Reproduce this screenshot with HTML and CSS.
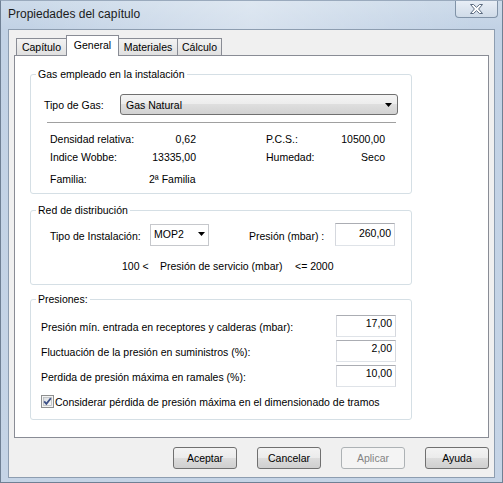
FILE: index.html
```html
<!DOCTYPE html>
<html lang="es">
<head>
<meta charset="utf-8">
<title>Propiedades del capítulo</title>
<link rel="stylesheet" href="styles.css">
</head>
<body>
<div class="window">
  <div class="titlebar">
    <span class="title">Propiedades del capítulo</span>
    <div class="close">
      <svg width="15" height="12" viewBox="0 0 15 12"><polygon points="1.5,1.5 4.5,1.5 7.5,4.3 10.5,1.5 13.5,1.5 9.6,6 13.5,10.5 10.5,10.5 7.5,7.7 4.5,10.5 1.5,10.5 5.4,6" fill="#fff" stroke="#5b6b80" stroke-width="1" stroke-linejoin="round"/></svg>
    </div>
  </div>
  <div class="client">
    <div class="tabs">
      <div class="tab t1">Capítulo</div>
      <div class="tab sel t2">General</div>
      <div class="tab t3">Materiales</div>
      <div class="tab t4">Cálculo</div>
    </div>
    <div class="panel">
      <div class="group g1">
        <span class="legend">Gas empleado en la instalación</span>
        <div class="gas-row">
          <span class="gas-label">Tipo de Gas:</span>
          <div class="combo big">
            <span>Gas Natural</span>
            <svg class="arrow" width="7" height="4" viewBox="0 0 7 4"><polygon points="0,0 7,0 3.5,4" fill="#000"/></svg>
          </div>
        </div>
        <div class="sep"></div>
        <div class="props">
          <span class="c1">Densidad relativa:</span><span class="c2">0,62</span><span class="c4">P.C.S.:</span><span class="c5">10500,00</span>
          <span class="c1">Indice Wobbe:</span><span class="c2">13335,00</span><span class="c4">Humedad:</span><span class="c5">Seco</span>
          <span class="c1">Familia:</span><span class="c2 left">2ª Familia</span>
        </div>
      </div>
      <div class="group g2">
        <span class="legend">Red de distribución</span>
        <div class="inst-row">
          <span class="inst-label">Tipo de Instalación:</span>
          <div class="combo small">
            <span>MOP2</span>
            <svg class="arrow" width="7" height="4" viewBox="0 0 7 4"><polygon points="0,0 7,0 3.5,4" fill="#000"/></svg>
          </div>
          <span class="pres-label">Presión (mbar) :</span>
          <div class="edit tall">260,00</div>
        </div>
        <div class="range">
          <span class="r1">100 &lt;</span><span class="r2">Presión de servicio (mbar)</span><span>&lt;= 2000</span>
        </div>
      </div>
      <div class="group g3">
        <span class="legend">Presiones:</span>
        <div class="prow"><span>Presión mín. entrada en receptores y calderas (mbar):</span><div class="edit">17,00</div></div>
        <div class="prow"><span>Fluctuación de la presión en suministros (%):</span><div class="edit">2,00</div></div>
        <div class="prow"><span>Perdida de presión máxima en ramales (%):</span><div class="edit">10,00</div></div>
        <div class="check-row">
          <svg class="checkbox" width="13" height="13" viewBox="0 0 13 13">
            <defs><linearGradient id="cbg" x1="0" y1="0" x2="1" y2="1"><stop offset="0" stop-color="#d9dcdf"/><stop offset="1" stop-color="#fbfbfb"/></linearGradient></defs>
            <rect x="0.5" y="0.5" width="12" height="12" fill="#f4f4f4" stroke="#8e8f8f"/>
            <rect x="2.5" y="2.5" width="8" height="8" fill="url(#cbg)" stroke="#b9bcbf" stroke-width="0.8"/>
            <path d="M3.2 6.4 L5.4 8.9 L9.8 3.3" fill="none" stroke="#3c4f86" stroke-width="1.8"/>
          </svg>
          <span>Considerar pérdida de presión máxima en el dimensionado de tramos</span>
        </div>
      </div>
    </div>
    <div class="buttons">
      <div class="btn">Aceptar</div>
      <div class="btn">Cancelar</div>
      <div class="btn disabled">Aplicar</div>
      <div class="btn">Ayuda</div>
    </div>
  </div>
</div>
</body>
</html>
```
FILE: styles.css
```css
* { box-sizing: border-box; }
html, body { margin: 0; padding: 0; }
body {
  font-family: "Liberation Sans", Arial, sans-serif;
  font-size: 10.5px;
  color: #000;
  background: #fff;
}
.window {
  width: 503px;
  height: 483px;
  border: 1px solid #6f8094;
  border-top-color: #9aaabd;
  background: linear-gradient(to bottom, #cddbea 0, #c2d2e5 28px, #c5d4e6 100%);
  display: flex;
  flex-direction: column;
  overflow: hidden;
}
.titlebar {
  height: 28px;
  flex: none;
  display: flex;
  justify-content: space-between;
  align-items: flex-start;
  background: linear-gradient(to right, rgba(255,255,255,0) 5%, rgba(255,255,255,0.35) 50%, rgba(255,255,255,0.1) 80%, rgba(255,255,255,0) 95%);
}
.title {
  font-size: 12px;
  line-height: 14px;
  color: #1b1b1b;
  margin: 6px 0 0 7px;
}
.close {
  width: 43px;
  height: 17px;
  margin-right: 4px;
  border: 1px solid #8193a8;
  border-top: none;
  border-radius: 0 0 4px 4px;
  background: linear-gradient(#e8eef6, #d0dbe8);
  display: flex;
  align-items: center;
  justify-content: center;
}
.client {
  flex: 1;
  margin: 0 7px 4px 7px;
  border: 1px solid #8d9db0;
  background: #f0f0f0;
  display: flex;
  flex-direction: column;
  padding: 5px 5px 8px 5px;
}
.tabs {
  height: 20px;
  flex: none;
  display: flex;
  align-items: flex-end;
  padding-left: 2px;
}
.tab {
  height: 17px;
  border: 1px solid #898c95;
  border-bottom: none;
  margin-left: -1px;
  background: linear-gradient(#f3f3f3, #e0e0e0);
  display: flex;
  align-items: center;
  justify-content: center;
  line-height: 13px;
}
.tab.t1 { margin-left: 0; width: 51px; }
.tab.t2 { width: 53px; }
.tab.t3 { width: 60px; }
.tab.t4 { width: 45px; }
.tab.sel {
  height: 21px;
  margin-bottom: -1px;
  background: #fff;
  position: relative;
  z-index: 1;
  padding-bottom: 1px;
}
.panel {
  height: 383px;
  flex: none;
  border: 1px solid #898c95;
  background: #fff;
  padding: 18px 0 0 15px;
}
.group {
  position: relative;
  width: 382px;
  border: 1px solid #d5dfe5;
  border-radius: 3px;
}
.legend {
  position: absolute;
  top: -7px;
  left: 5px;
  padding: 0 2px;
  line-height: 13px;
  background: #fff;
}
.g1 { height: 120px; padding-top: 19px; }
.g2 { height: 75px; margin-top: 16px; padding-top: 12px; }
.g3 { height: 121px; margin-top: 14px; padding: 15px 0 0 10px; }

.gas-row {
  display: flex;
  align-items: center;
  height: 21px;
  padding-left: 13px;
}
.gas-label { width: 76px; }
.combo {
  display: flex;
  align-items: center;
  justify-content: space-between;
}
.combo.big {
  width: 278px;
  height: 21px;
  border: 1px solid #707070;
  border-radius: 3px;
  background: linear-gradient(#f4f4f4 0, #ececec 50%, #dedede 50%, #d2d2d2 100%);
  padding: 0 5px 0 5px;
}
.combo.small {
  width: 59px;
  height: 22px;
  border: 1px solid #c6c8cc;
  background: #fff;
  padding: 0 3px 2px 3px;
}
.sep {
  margin: 7px 0 0 16px;
  width: 349px;
  border-top: 1px solid #a0a0a0;
}
.props {
  display: grid;
  grid-template-columns: 99px 47px 70px 70px 49px;
  grid-template-rows: 18px 18px 22px;
  align-items: end;
  margin: 7px 0 0 19px;
  line-height: 18px;
}
.c1 { grid-column: 1; }
.c2 { grid-column: 2; text-align: right; white-space: nowrap; }
.c4 { grid-column: 4; }
.c5 { grid-column: 5; text-align: right; }
.c2.left { text-align: left; }

.inst-row {
  display: flex;
  align-items: center;
  height: 23px;
  padding-left: 19px;
}
.inst-label { width: 100px; padding-top: 2px; }
.pres-label { margin-left: 40px; width: 86px; padding-top: 2px; }
.edit {
  width: 60px;
  height: 22px;
  border: 1px solid;
  border-color: #abadb3 #d5d8de #dfe3e8 #d5d8de;
  background: #fff;
  text-align: right;
  padding: 1px 3px 0 0;
  line-height: 13px;
}
.edit.tall { height: 23px; padding-top: 3px; }
.range {
  display: flex;
  margin-top: 14px;
  padding-left: 91px;
  line-height: 13px;
}
.r1 { width: 38px; }
.r2 { width: 135px; }

.prow {
  display: flex;
  align-items: center;
  height: 22px;
  margin-bottom: 3px;
}
.prow span { width: 295px; padding-top: 2px; }
.check-row {
  display: flex;
  align-items: center;
  height: 13px;
  margin-top: 8px;
}
.checkbox { margin-right: 1px; flex: none; }

.buttons {
  display: flex;
  justify-content: flex-end;
  gap: 20px;
  margin-top: 9px;
  height: 22px;
  flex: none;
}
.btn {
  width: 64px;
  height: 22px;
  border: 1px solid #707070;
  border-radius: 3px;
  background: linear-gradient(#f3f3f3 0, #ebebeb 50%, #dddddd 50%, #cfcfcf 100%);
  display: flex;
  align-items: center;
  justify-content: center;
}
.btn.disabled {
  border-color: #adb2b5;
  background: #f4f4f4;
  color: #838383;
}
```
